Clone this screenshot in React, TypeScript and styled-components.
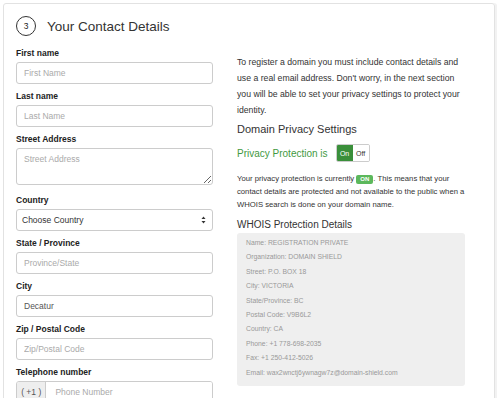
import React from 'react'
import styled, { createGlobalStyle } from 'styled-components'

const GlobalStyle = createGlobalStyle`
  html, body {
    margin: 0;
    padding: 0;
    background: #fff;
    font-family: 'Liberation Sans', Arial, sans-serif;
    color: #333;
  }
`

const Card = styled.div`
  margin: 3px 0 0 3px;
  width: 492px;
  height: 420px;
  border: 1px solid #e2e2e2;
  border-radius: 3px;
  box-shadow: 2px 0 0 #f2f2f2;
  box-sizing: border-box;
  padding: 12px 12px 0 12px;
  overflow: hidden;
`

const Header = styled.div`
  display: flex;
  align-items: center;
  gap: 11px;
  margin-bottom: 11px;
`

const StepCircle = styled.div`
  width: 18px;
  height: 18px;
  border: 1px solid #333;
  border-radius: 50%;
  display: flex;
  align-items: center;
  justify-content: center;
  font-size: 8.5px;
  color: #222;
`

const Title = styled.h2`
  margin: 0;
  font-size: 13.5px;
  font-weight: 400;
  color: #333;
`

const Columns = styled.div`
  display: grid;
  grid-template-columns: 197px 228px;
  column-gap: 24px;
`

const FormColumn = styled.div`
  display: flex;
  flex-direction: column;
  gap: 6px;
`

const Field = styled.div<{ extra?: number }>`
  display: flex;
  flex-direction: column;
  gap: 3px;
  margin-bottom: ${({ extra }) => extra ?? 0}px;
`

const Label = styled.label`
  font-size: 8.5px;
  line-height: 12px;
  font-weight: 700;
  color: #222;
`

const Input = styled.input`
  box-sizing: border-box;
  height: 22px;
  width: 100%;
  border: 1px solid #ccc;
  border-radius: 3px;
  padding: 0 7px;
  font-family: inherit;
  font-size: 8.5px;
  color: #555;
  &::placeholder {
    color: #aaa;
  }
`

const TextArea = styled.textarea`
  display: block;
  box-sizing: border-box;
  height: 37px;
  width: 100%;
  border: 1px solid #ccc;
  border-radius: 3px;
  padding: 5px 7px;
  font-family: inherit;
  font-size: 8.5px;
  resize: vertical;
  &::placeholder {
    color: #aaa;
  }
`

const SelectBox = styled.div`
  box-sizing: border-box;
  height: 22px;
  border: 1px solid #ccc;
  border-radius: 3px;
  padding: 0 6px 0 5px;
  display: flex;
  align-items: center;
  justify-content: space-between;
  font-size: 8.5px;
  color: #333;
`

const InputGroup = styled.div`
  display: flex;
  height: 22px;
  border: 1px solid #ccc;
  border-radius: 3px;
  box-sizing: border-box;
  overflow: hidden;
`

const Addon = styled.span`
  width: 34px;
  background: #eee;
  border-right: 1px solid #ccc;
  display: flex;
  align-items: center;
  justify-content: center;
  font-size: 8.5px;
  color: #555;
`

const GroupInput = styled(Input)`
  border: none;
  border-radius: 0;
  height: 20px;
  padding-left: 9px;
`

const InfoColumn = styled.div`
  padding-top: 7px;
  display: flex;
  flex-direction: column;
`

const Intro = styled.p`
  margin: 0 0 5px;
  font-size: 8.7px;
  line-height: 16px;
  color: #333;
`

const SubHeading = styled.h3<{ size?: number; gap?: number }>`
  margin: 0 0 ${({ gap }) => gap ?? 9}px;
  font-size: ${({ size }) => size ?? 11}px;
  font-weight: 400;
  color: #333;
`

const ToggleRow = styled.div`
  display: flex;
  align-items: center;
  gap: 8px;
  margin-bottom: 10px;
`

const GreenText = styled.span`
  font-size: 10px;
  color: #3f9a3f;
`

const Toggle = styled.div`
  display: flex;
  height: 16px;
  border: 1px solid #ccc;
  border-radius: 2px;
  overflow: hidden;
`

const ToggleOption = styled.span<{ active?: boolean }>`
  width: 16px;
  display: flex;
  align-items: center;
  justify-content: center;
  font-size: 7px;
  background: ${({ active }) => (active ? '#3a8f3a' : '#fff')};
  color: ${({ active }) => (active ? '#fff' : '#333')};
`

const Small = styled.p`
  margin: 0 0 8px;
  font-size: 7.7px;
  line-height: 13px;
  color: #333;
`

const Badge = styled.span`
  display: inline-block;
  background: #5cb85c;
  color: #fff;
  font-size: 6px;
  font-weight: 700;
  padding: 0 4px;
  border-radius: 2px;
  line-height: 9px;
`

const WhoisBox = styled.div`
  background: #efefef;
  border-radius: 3px;
  padding: 3px 9px 6px;
  display: flex;
  flex-direction: column;
`

const WhoisLine = styled.div`
  font-size: 6.8px;
  line-height: 14.4px;
  color: #999;
`

const whois = [
  'Name: REGISTRATION PRIVATE',
  'Organization: DOMAIN SHIELD',
  'Street: P.O. BOX 18',
  'City: VICTORIA',
  'State/Province: BC',
  'Postal Code: V9B6L2',
  'Country: CA',
  'Phone: +1 778-698-2035',
  'Fax: +1 250-412-5026',
  'Email: wax2wnctj6ywnagw7z@domain-shield.com',
]

function SelectArrows() {
  return (
    <svg width="5" height="8" viewBox="0 0 5 8">
      <path d="M0.5 3 L2.5 0.5 L4.5 3 Z" fill="#333" />
      <path d="M0.5 5 L2.5 7.5 L4.5 5 Z" fill="#333" />
    </svg>
  )
}

export default function App() {
  return (
    <>
      <GlobalStyle />
      <Card>
        <Header>
          <StepCircle>3</StepCircle>
          <Title>Your Contact Details</Title>
        </Header>
        <Columns>
          <FormColumn>
            <Field>
              <Label>First name</Label>
              <Input placeholder="First Name" />
            </Field>
            <Field>
              <Label>Last name</Label>
              <Input placeholder="Last Name" />
            </Field>
            <Field extra={3}>
              <Label>Street Address</Label>
              <TextArea placeholder="Street Address" />
            </Field>
            <Field>
              <Label>Country</Label>
              <SelectBox>
                <span>Choose Country</span>
                <SelectArrows />
              </SelectBox>
            </Field>
            <Field>
              <Label>State / Province</Label>
              <Input placeholder="Province/State" />
            </Field>
            <Field>
              <Label>City</Label>
              <Input defaultValue="Decatur" />
            </Field>
            <Field>
              <Label>Zip / Postal Code</Label>
              <Input placeholder="Zip/Postal Code" />
            </Field>
            <Field>
              <Label>Telephone number</Label>
              <InputGroup>
                <Addon>( +1 )</Addon>
                <GroupInput placeholder="Phone Number" />
              </InputGroup>
            </Field>
          </FormColumn>
          <InfoColumn>
            <Intro>
              To register a domain you must include contact details and use a real email address. Don't worry, in the
              next section you will be able to set your privacy settings to protect your identity.
            </Intro>
            <SubHeading>Domain Privacy Settings</SubHeading>
            <ToggleRow>
              <GreenText>Privacy Protection is</GreenText>
              <Toggle>
                <ToggleOption active>On</ToggleOption>
                <ToggleOption>Off</ToggleOption>
              </Toggle>
            </ToggleRow>
            <Small>
              Your privacy protection is currently <Badge>ON</Badge>. This means that your contact details are
              protected and not available to the public when a WHOIS search is done on your domain name.
            </Small>
            <SubHeading as="h4" size={10} gap={3}>
              WHOIS Protection Details
            </SubHeading>
            <WhoisBox>
              {whois.map(line => (
                <WhoisLine key={line}>{line}</WhoisLine>
              ))}
            </WhoisBox>
          </InfoColumn>
        </Columns>
      </Card>
    </>
  )
}
